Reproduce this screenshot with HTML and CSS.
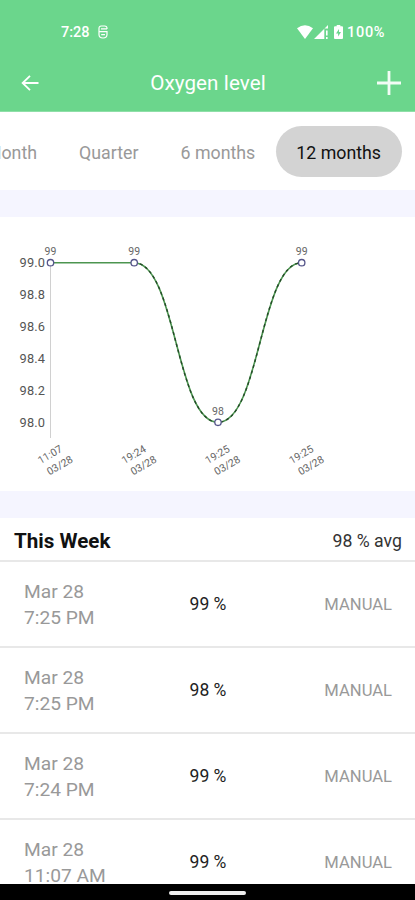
FILE: index.html
```html
<!DOCTYPE html>
<html lang="en">
<head>
    <meta charset="UTF-8">
    <meta name="viewport" content="width=device-width, initial-scale=1.0">
    <title>Oxygen level</title>
    <link rel="stylesheet" href="styles.css">
</head>
<body>
    <header class="header">
        <div class="status-bar">
            <span class="clock">7:28</span>
            <svg class="icon-app" width="10" height="14" viewBox="0 0 10 14" fill="none" stroke="#fff" stroke-width="1.2">
                <path d="M9 4V3.2Q9 1 6.8 1H3.2Q1 1 1 3.2V9.5Q1 13 5 13Q9 13 9 9.5V6.6H1M3 3.8H9M3.2 9.6H7"/>
            </svg>
            <div class="status-right">
                <svg width="16" height="14" viewBox="0 0 16 14" fill="#fff">
                    <path d="M0 3.2Q8-2.8 16 3.2L8 14Z"/>
                </svg>
                <svg class="icon-signal" width="14" height="14" viewBox="0 0 14 14" fill="#fff">
                    <path d="M0 14L14 0V3.5H10.3V14ZM12 5.5H13.6V10.5H12ZM12 12H13.6V14H12Z"/>
                </svg>
                <svg class="icon-battery" width="9" height="14" viewBox="0 0 9 14">
                    <path fill="#fff" d="M2.7 0H6.3V1.3H8Q9 1.3 9 2.3V13Q9 14 8 14H1Q0 14 0 13V2.3Q0 1.3 1 1.3H2.7Z"/>
                    <path fill="#6bd68c" d="M5 4L2 8.5H4.1V11.5L7 7H5Z"/>
                </svg>
                <span class="battery-text">100%</span>
            </div>
        </div>
        <div class="title-bar">
            <svg class="icon-back" width="18" height="16" viewBox="0 0 18 16" fill="none" stroke="#fff" stroke-width="1.8">
                <path d="M17.5 8H1.5M9 .8L1.6 8L9 15.2"/>
            </svg>
            <h1>Oxygen level</h1>
            <svg class="icon-add" width="24" height="24" viewBox="0 0 24 24" stroke="#f2fcf5" stroke-width="2.8">
                <path d="M12 0V24M0 12H24"/>
            </svg>
        </div>
    </header>

    <nav class="tabs">
        <span class="tab">Month</span>
        <span class="tab">Quarter</span>
        <span class="tab">6 months</span>
        <span class="tab active">12 months</span>
    </nav>

    <section class="chart">
        <svg width="415" height="274" viewBox="0 217 415 274">
            <path class="axis" d="M50.5 263V438"/>
            <g class="y-labels">
                <text x="19.5" y="266.6" textLength="25.5">99.0</text>
                <text x="19.5" y="298.6" textLength="25.5">98.8</text>
                <text x="19.5" y="330.6" textLength="25.5">98.6</text>
                <text x="19.5" y="362.6" textLength="25.5">98.4</text>
                <text x="19.5" y="394.6" textLength="25.5">98.2</text>
                <text x="19.5" y="426.6" textLength="25.5">98.0</text>
            </g>
            <path class="line" d="M50.5 262.7H134C176 262.7 176 422.3 218 422.3C260 422.3 260 262.7 301.7 262.7"/>
            <path class="line-dash" d="M134 262.7C176 262.7 176 422.3 218 422.3C260 422.3 260 262.7 301.7 262.7"/>
            <g class="points">
                <circle cx="50.5" cy="262.7" r="3.2"/>
                <circle cx="134.2" cy="262.7" r="3.2"/>
                <circle cx="218" cy="422.3" r="3.2"/>
                <circle cx="301.7" cy="262.7" r="3.2"/>
            </g>
            <g class="values">
                <text x="50.5" y="254.8">99</text>
                <text x="134.2" y="254.8">99</text>
                <text x="218" y="414.6">98</text>
                <text x="301.7" y="254.8">99</text>
            </g>
            <g class="x-labels">
                <g transform="translate(50.3 455) rotate(-30)">
                    <text x="0" y="3">11:07</text>
                    <text x="3" y="17.3">03/28</text>
                </g>
                <g transform="translate(134 455) rotate(-30)">
                    <text x="0" y="3">19:24</text>
                    <text x="3" y="17.3">03/28</text>
                </g>
                <g transform="translate(217.7 455) rotate(-30)">
                    <text x="0" y="3">19:25</text>
                    <text x="3" y="17.3">03/28</text>
                </g>
                <g transform="translate(301.5 455) rotate(-30)">
                    <text x="0" y="3">19:25</text>
                    <text x="3" y="17.3">03/28</text>
                </g>
            </g>
        </svg>
    </section>

    <section class="readings">
        <div class="week">
            <h2>This Week</h2>
            <span class="avg">98 % avg</span>
        </div>
        <div class="row">
            <div class="date">Mar 28<br>7:25 PM</div>
            <div class="value">99 %</div>
            <div class="source">MANUAL</div>
        </div>
        <div class="row">
            <div class="date">Mar 28<br>7:25 PM</div>
            <div class="value">98 %</div>
            <div class="source">MANUAL</div>
        </div>
        <div class="row">
            <div class="date">Mar 28<br>7:24 PM</div>
            <div class="value">99 %</div>
            <div class="source">MANUAL</div>
        </div>
        <div class="row">
            <div class="date">Mar 28<br>11:07 AM</div>
            <div class="value">99 %</div>
            <div class="source">MANUAL</div>
        </div>
    </section>

    <footer class="nav-bar">
        <div class="handle"></div>
    </footer>
</body>
</html>
```
FILE: styles.css
```css
* {
    box-sizing: border-box;
}

body {
    font-family: Roboto, "Liberation Sans", sans-serif;
    background-color: #f5f5ff;
    margin: 0;
    width: 415px;
    height: 900px;
    display: flex;
    flex-direction: column;
    overflow: hidden;
}

svg {
    display: block;
    flex-shrink: 0;
}

.header {
    background-color: #6bd68c;
    color: white;
    height: 112px;
    flex-shrink: 0;
    border-bottom: 1px solid #8fdfa8;
}

.status-bar {
    display: flex;
    align-items: center;
    height: 64px;
    padding: 0 29px 0 61px;
    font-size: 14.5px;
    font-weight: 500;
}

.clock {
    width: 28px;
}

.icon-app {
    margin-left: 9px;
}

.status-right {
    display: flex;
    align-items: center;
    margin-left: auto;
}

.icon-signal {
    margin-left: 1px;
}

.icon-battery {
    margin-left: 6px;
    margin-right: 4px;
}

.battery-text {
    width: 39px;
    letter-spacing: 0.7px;
}

.title-bar {
    display: flex;
    align-items: center;
    justify-content: space-between;
    height: 37px;
    padding: 0 14px 0 21px;
}

h1 {
    font-size: 20.6px;
    font-weight: 400;
    margin: 0;
    position: relative;
    letter-spacing: 0.1px;
}

.tabs {
    background-color: #fff;
    height: 78px;
    flex-shrink: 0;
    display: flex;
    align-items: center;
    justify-content: flex-end;
    padding-right: 13px;
    padding-top: 1px;
    margin-bottom: 27px;
}

.tab {
    color: #999;
    font-size: 17.8px;
    height: 51px;
    line-height: 53px;
    padding: 0 21px;
    white-space: nowrap;
}

.tab.active {
    background-color: #d3d3d3;
    color: #111;
    border-radius: 26px;
    padding: 0 21px 0 20px;
}

.chart {
    background-color: #fff;
    height: 274px;
    flex-shrink: 0;
    margin-bottom: 27px;
}

.axis {
    stroke: #d0d0d0;
    stroke-width: 1;
}

.y-labels {
    font-size: 12.8px;
    fill: #555;
}

.line {
    fill: none;
    stroke: #4c9550;
    stroke-width: 1.6;
}

.line-dash {
    fill: none;
    stroke: #244a28;
    stroke-width: 1.4;
    stroke-dasharray: 3 3;
}

.points {
    fill: #fff;
    stroke: #55558a;
    stroke-width: 1.3;
}

.values, .x-labels {
    font-size: 10.5px;
    fill: #666;
    text-anchor: middle;
}

.readings {
    background-color: #fff;
    height: 366px;
    flex-shrink: 0;
    overflow: hidden;
}

.week {
    display: flex;
    align-items: center;
    justify-content: space-between;
    height: 44px;
    padding: 0 13px 0 14px;
    border-bottom: 2px solid #e8e8e8;
}

h2 {
    font-size: 20.6px;
    font-weight: 700;
    color: #111;
    margin: 0;
    padding-top: 3px;
}

.avg {
    font-size: 17.7px;
    color: #333;
    padding-top: 4px;
}

.row {
    display: grid;
    grid-template-columns: 1fr 74px 1fr;
    align-items: center;
    height: 86px;
    padding: 0 23px 0 24px;
    border-bottom: 2px solid #e8e8e8;
}

.date {
    font-size: 19.2px;
    line-height: 26px;
    color: #999;
    padding-top: 2px;
}

.value {
    font-size: 17.5px;
    color: #222;
    text-align: center;
}

.source {
    font-size: 16.6px;
    color: #999;
    text-align: right;
}

.nav-bar {
    background-color: #000;
    height: 16px;
    flex-shrink: 0;
    display: flex;
    justify-content: center;
    padding-top: 7px;
}

.handle {
    width: 77px;
    height: 4px;
    border-radius: 2px;
    background-color: #eee;
}
```
